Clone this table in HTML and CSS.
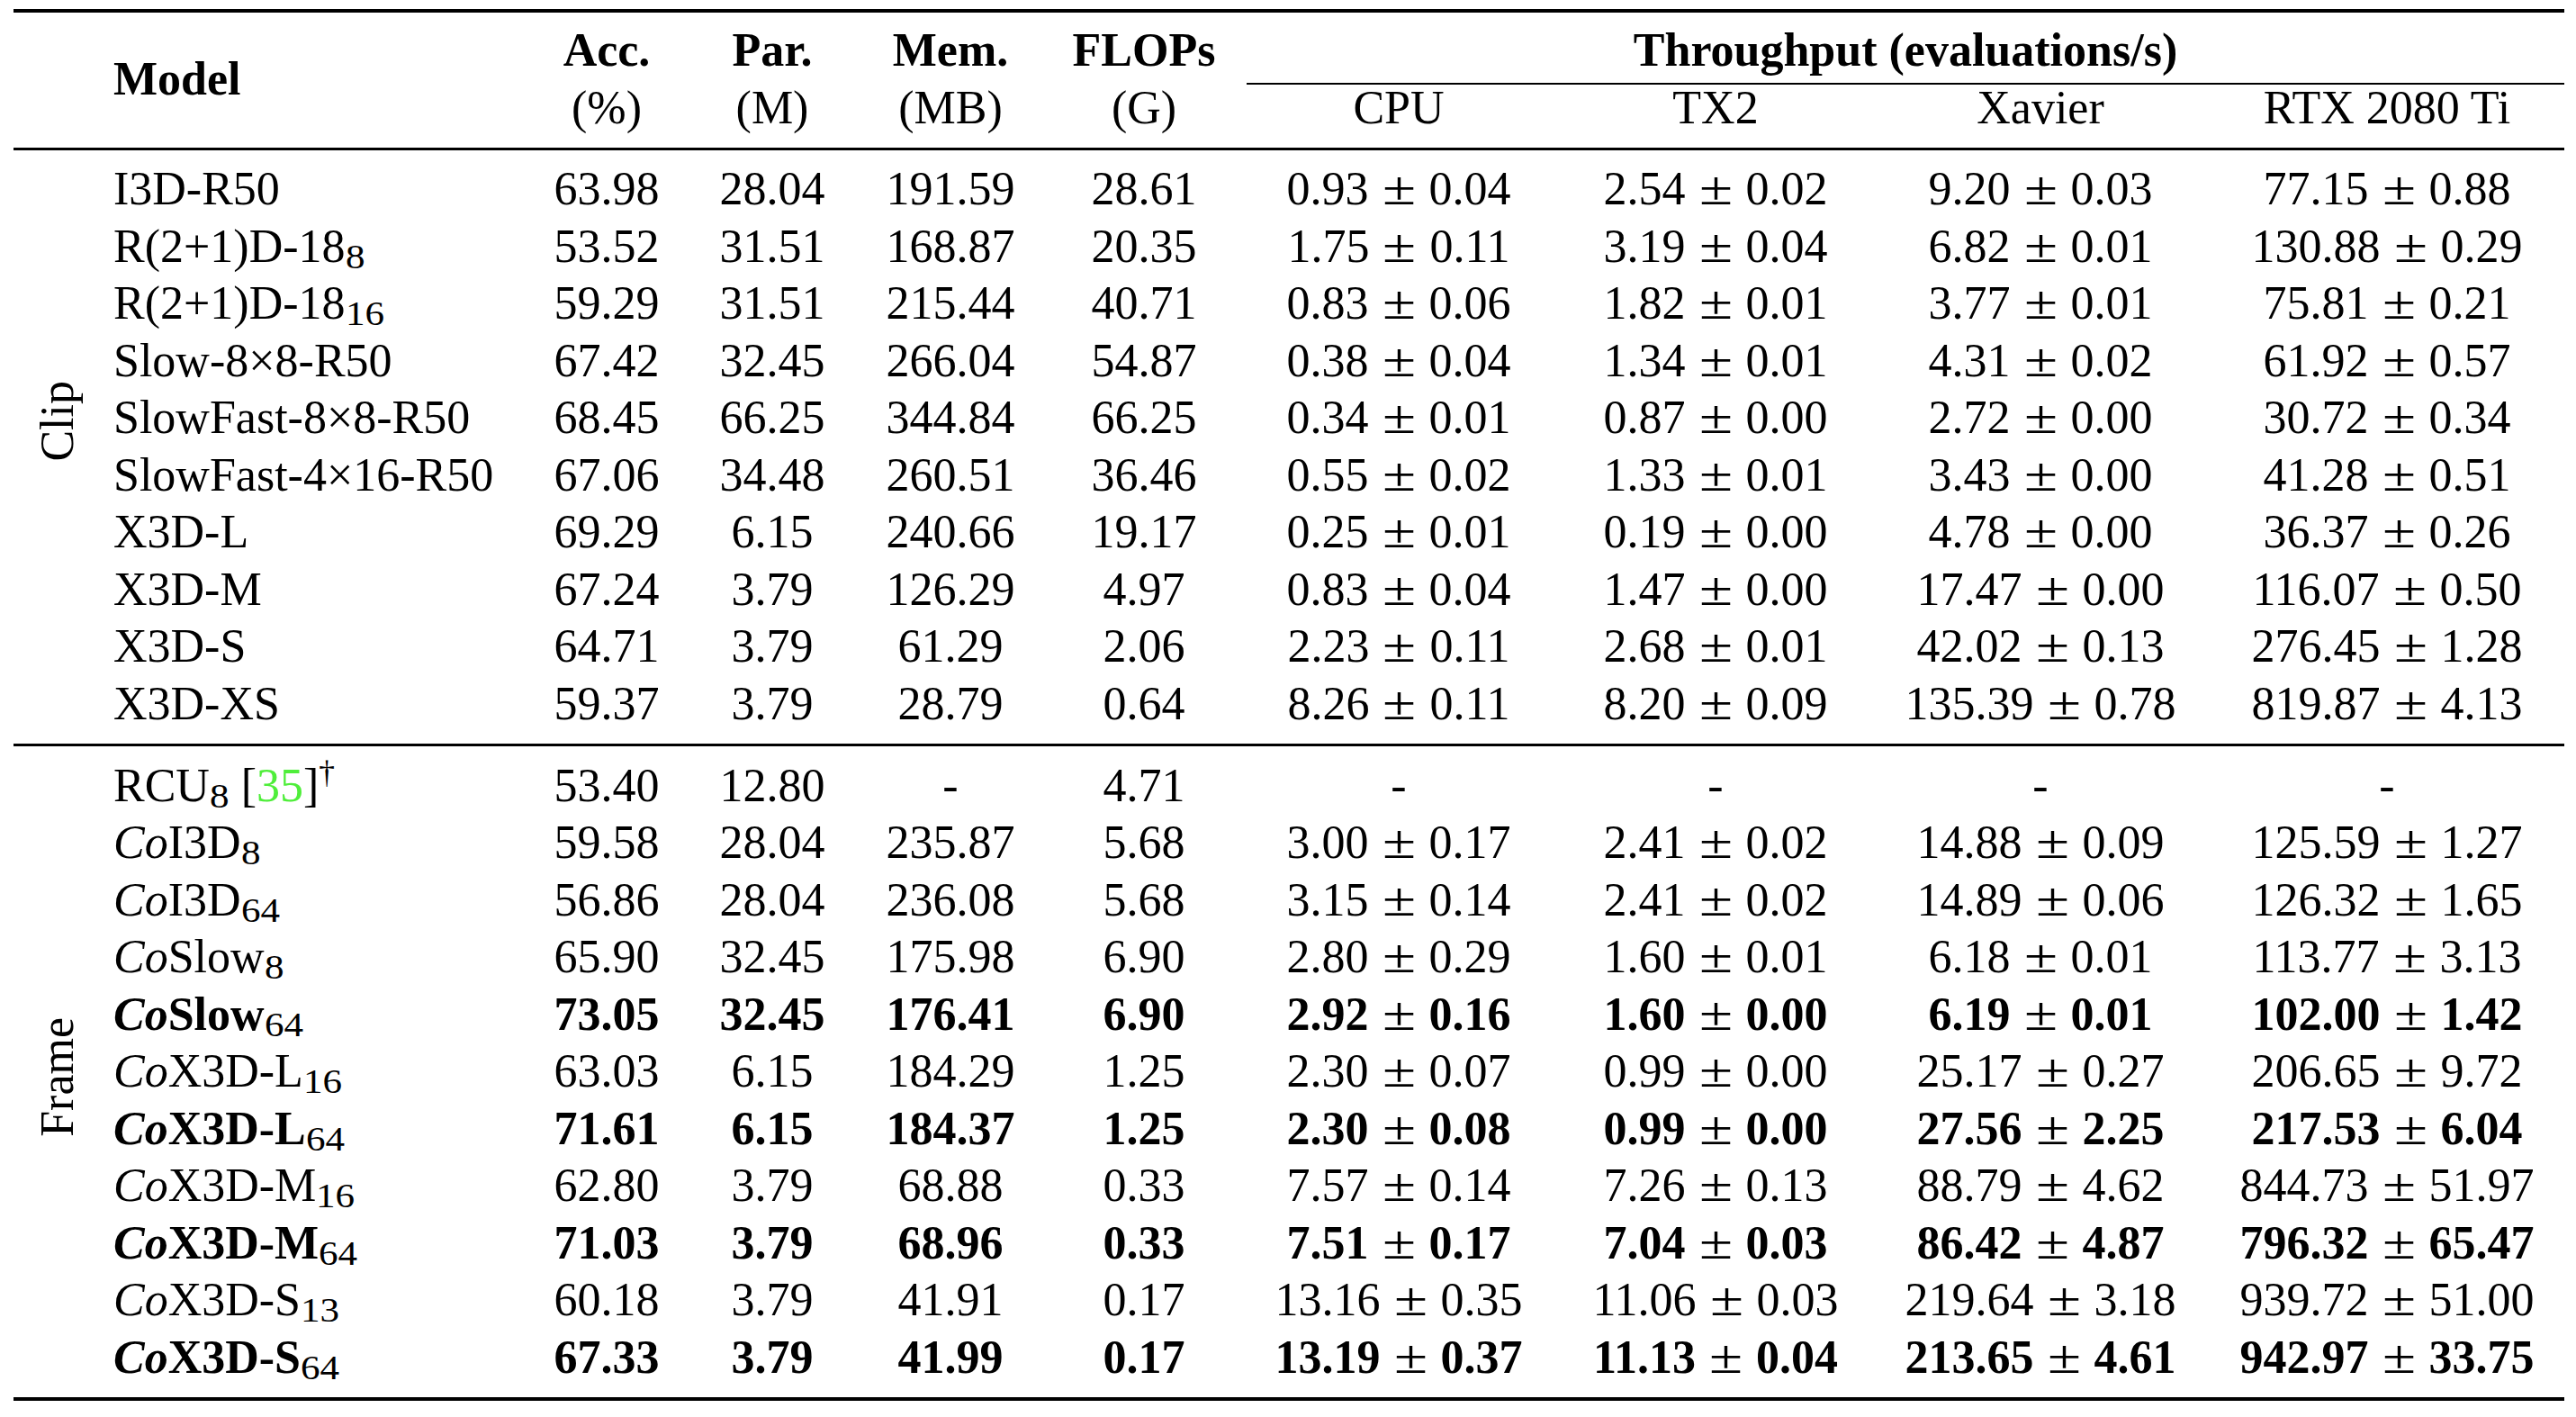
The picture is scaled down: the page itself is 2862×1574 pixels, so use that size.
FILE: index.html
```html
<!DOCTYPE html>
<html>
<head>
<meta charset="utf-8">
<link rel="stylesheet" href="styles.css">
</head>
<body>
<div class="table">
  <div class="rule-top"></div>

  <div class="corner"></div>
  <div class="model-head">Model</div>
  <div class="h1">Acc.</div>
  <div class="h1">Par.</div>
  <div class="h1">Mem.</div>
  <div class="h1 f">FLOPs</div>
  <div class="h1 thr">Throughput (evaluations/s)</div>
  <div class="h2">(%)</div>
  <div class="h2">(M)</div>
  <div class="h2">(MB)</div>
  <div class="h2 f">(G)</div>
  <div class="h2">CPU</div>
  <div class="h2">TX2</div>
  <div class="h2">Xavier</div>
  <div class="h2 r">RTX 2080 Ti</div>

  <div class="mid"></div>

  <div class="lab clip">Clip</div>
  <div class="c m">I3D-R50</div><div class="c">63.98</div><div class="c">28.04</div><div class="c">191.59</div><div class="c f">28.61</div><div class="c">0.93<span class="pm">±</span>0.04</div><div class="c">2.54<span class="pm">±</span>0.02</div><div class="c">9.20<span class="pm">±</span>0.03</div><div class="c r">77.15<span class="pm">±</span>0.88</div>
  <div class="c m">R(2+1)D-18<span class="s">8</span></div><div class="c">53.52</div><div class="c">31.51</div><div class="c">168.87</div><div class="c f">20.35</div><div class="c">1.75<span class="pm">±</span>0.11</div><div class="c">3.19<span class="pm">±</span>0.04</div><div class="c">6.82<span class="pm">±</span>0.01</div><div class="c r">130.88<span class="pm">±</span>0.29</div>
  <div class="c m">R(2+1)D-18<span class="s">16</span></div><div class="c">59.29</div><div class="c">31.51</div><div class="c">215.44</div><div class="c f">40.71</div><div class="c">0.83<span class="pm">±</span>0.06</div><div class="c">1.82<span class="pm">±</span>0.01</div><div class="c">3.77<span class="pm">±</span>0.01</div><div class="c r">75.81<span class="pm">±</span>0.21</div>
  <div class="c m">Slow-8×8-R50</div><div class="c">67.42</div><div class="c">32.45</div><div class="c">266.04</div><div class="c f">54.87</div><div class="c">0.38<span class="pm">±</span>0.04</div><div class="c">1.34<span class="pm">±</span>0.01</div><div class="c">4.31<span class="pm">±</span>0.02</div><div class="c r">61.92<span class="pm">±</span>0.57</div>
  <div class="c m">SlowFast-8×8-R50</div><div class="c">68.45</div><div class="c">66.25</div><div class="c">344.84</div><div class="c f">66.25</div><div class="c">0.34<span class="pm">±</span>0.01</div><div class="c">0.87<span class="pm">±</span>0.00</div><div class="c">2.72<span class="pm">±</span>0.00</div><div class="c r">30.72<span class="pm">±</span>0.34</div>
  <div class="c m">SlowFast-4×16-R50</div><div class="c">67.06</div><div class="c">34.48</div><div class="c">260.51</div><div class="c f">36.46</div><div class="c">0.55<span class="pm">±</span>0.02</div><div class="c">1.33<span class="pm">±</span>0.01</div><div class="c">3.43<span class="pm">±</span>0.00</div><div class="c r">41.28<span class="pm">±</span>0.51</div>
  <div class="c m">X3D-L</div><div class="c">69.29</div><div class="c">6.15</div><div class="c">240.66</div><div class="c f">19.17</div><div class="c">0.25<span class="pm">±</span>0.01</div><div class="c">0.19<span class="pm">±</span>0.00</div><div class="c">4.78<span class="pm">±</span>0.00</div><div class="c r">36.37<span class="pm">±</span>0.26</div>
  <div class="c m">X3D-M</div><div class="c">67.24</div><div class="c">3.79</div><div class="c">126.29</div><div class="c f">4.97</div><div class="c">0.83<span class="pm">±</span>0.04</div><div class="c">1.47<span class="pm">±</span>0.00</div><div class="c">17.47<span class="pm">±</span>0.00</div><div class="c r">116.07<span class="pm">±</span>0.50</div>
  <div class="c m">X3D-S</div><div class="c">64.71</div><div class="c">3.79</div><div class="c">61.29</div><div class="c f">2.06</div><div class="c">2.23<span class="pm">±</span>0.11</div><div class="c">2.68<span class="pm">±</span>0.01</div><div class="c">42.02<span class="pm">±</span>0.13</div><div class="c r">276.45<span class="pm">±</span>1.28</div>
  <div class="c m">X3D-XS</div><div class="c">59.37</div><div class="c">3.79</div><div class="c">28.79</div><div class="c f">0.64</div><div class="c">8.26<span class="pm">±</span>0.11</div><div class="c">8.20<span class="pm">±</span>0.09</div><div class="c">135.39<span class="pm">±</span>0.78</div><div class="c r">819.87<span class="pm">±</span>4.13</div>

  <div class="mid sep"></div>

  <div class="lab frame">Frame</div>
  <div class="c m">RCU<span class="s">8</span> [<span class="cite">35</span>]<span class="dag">†</span></div><div class="c">53.40</div><div class="c">12.80</div><div class="c">-</div><div class="c f">4.71</div><div class="c">-</div><div class="c">-</div><div class="c">-</div><div class="c r">-</div>
  <div class="c m"><i>Co</i>I3D<span class="s">8</span></div><div class="c">59.58</div><div class="c">28.04</div><div class="c">235.87</div><div class="c f">5.68</div><div class="c">3.00<span class="pm">±</span>0.17</div><div class="c">2.41<span class="pm">±</span>0.02</div><div class="c">14.88<span class="pm">±</span>0.09</div><div class="c r">125.59<span class="pm">±</span>1.27</div>
  <div class="c m"><i>Co</i>I3D<span class="s">64</span></div><div class="c">56.86</div><div class="c">28.04</div><div class="c">236.08</div><div class="c f">5.68</div><div class="c">3.15<span class="pm">±</span>0.14</div><div class="c">2.41<span class="pm">±</span>0.02</div><div class="c">14.89<span class="pm">±</span>0.06</div><div class="c r">126.32<span class="pm">±</span>1.65</div>
  <div class="c m"><i>Co</i>Slow<span class="s">8</span></div><div class="c">65.90</div><div class="c">32.45</div><div class="c">175.98</div><div class="c f">6.90</div><div class="c">2.80<span class="pm">±</span>0.29</div><div class="c">1.60<span class="pm">±</span>0.01</div><div class="c">6.18<span class="pm">±</span>0.01</div><div class="c r">113.77<span class="pm">±</span>3.13</div>
  <div class="c m b"><i>Co</i>Slow<span class="s">64</span></div><div class="c b">73.05</div><div class="c b">32.45</div><div class="c b">176.41</div><div class="c f b">6.90</div><div class="c b">2.92<span class="pm">±</span>0.16</div><div class="c b">1.60<span class="pm">±</span>0.00</div><div class="c b">6.19<span class="pm">±</span>0.01</div><div class="c r b">102.00<span class="pm">±</span>1.42</div>
  <div class="c m"><i>Co</i>X3D-L<span class="s">16</span></div><div class="c">63.03</div><div class="c">6.15</div><div class="c">184.29</div><div class="c f">1.25</div><div class="c">2.30<span class="pm">±</span>0.07</div><div class="c">0.99<span class="pm">±</span>0.00</div><div class="c">25.17<span class="pm">±</span>0.27</div><div class="c r">206.65<span class="pm">±</span>9.72</div>
  <div class="c m b"><i>Co</i>X3D-L<span class="s">64</span></div><div class="c b">71.61</div><div class="c b">6.15</div><div class="c b">184.37</div><div class="c f b">1.25</div><div class="c b">2.30<span class="pm">±</span>0.08</div><div class="c b">0.99<span class="pm">±</span>0.00</div><div class="c b">27.56<span class="pm">±</span>2.25</div><div class="c r b">217.53<span class="pm">±</span>6.04</div>
  <div class="c m"><i>Co</i>X3D-M<span class="s">16</span></div><div class="c">62.80</div><div class="c">3.79</div><div class="c">68.88</div><div class="c f">0.33</div><div class="c">7.57<span class="pm">±</span>0.14</div><div class="c">7.26<span class="pm">±</span>0.13</div><div class="c">88.79<span class="pm">±</span>4.62</div><div class="c r">844.73<span class="pm">±</span>51.97</div>
  <div class="c m b"><i>Co</i>X3D-M<span class="s">64</span></div><div class="c b">71.03</div><div class="c b">3.79</div><div class="c b">68.96</div><div class="c f b">0.33</div><div class="c b">7.51<span class="pm">±</span>0.17</div><div class="c b">7.04<span class="pm">±</span>0.03</div><div class="c b">86.42<span class="pm">±</span>4.87</div><div class="c r b">796.32<span class="pm">±</span>65.47</div>
  <div class="c m"><i>Co</i>X3D-S<span class="s">13</span></div><div class="c">60.18</div><div class="c">3.79</div><div class="c">41.91</div><div class="c f">0.17</div><div class="c">13.16<span class="pm">±</span>0.35</div><div class="c">11.06<span class="pm">±</span>0.03</div><div class="c">219.64<span class="pm">±</span>3.18</div><div class="c r">939.72<span class="pm">±</span>51.00</div>
  <div class="c m b"><i>Co</i>X3D-S<span class="s">64</span></div><div class="c b">67.33</div><div class="c b">3.79</div><div class="c b">41.99</div><div class="c f b">0.17</div><div class="c b">13.19<span class="pm">±</span>0.37</div><div class="c b">11.13<span class="pm">±</span>0.04</div><div class="c b">213.65<span class="pm">±</span>4.61</div><div class="c r b">942.97<span class="pm">±</span>33.75</div>

  <div class="rule-bottom"></div>
</div>
</body>
</html>
```

FILE: styles.css
```css
html, body {
  margin: 0;
  padding: 0;
  background: #fff;
}

.table {
  display: grid;
  grid-template-columns: 97px 486px 152px 216px 180px 239px 338px 366px 356px 404px;
  width: 2834px;
  margin: 10px 0 0 15px;
  font-family: "Liberation Serif", "Times New Roman", serif;
  font-size: 52px;
  color: #000;
}

.rule-top {
  grid-column: 1 / -1;
  height: 4px;
  background: #000;
}

.rule-bottom {
  grid-column: 1 / -1;
  height: 4px;
  background: #000;
  margin-top: 12.25px;
}

.mid {
  grid-column: 1 / -1;
  height: 3px;
  background: #000;
  margin-bottom: 11.25px;
}

.mid.sep {
  margin-top: 12.25px;
  margin-bottom: 12.25px;
}

.corner {
  grid-row: span 2;
}

.model-head {
  grid-row: span 2;
  align-self: center;
  font-weight: 700;
  line-height: 52px;
  padding-left: 14px;
  padding-bottom: 3px;
}

.h1 {
  font-weight: 700;
  text-align: center;
  line-height: 52px;
  padding: 16px 0 10px;
  white-space: nowrap;
}

.thr {
  grid-column: span 4;
  border-bottom: 2px solid #000;
}

.h2 {
  text-align: center;
  line-height: 52px;
  padding-bottom: 18px;
  white-space: nowrap;
}

.lab {
  writing-mode: vertical-rl;
  transform: rotate(180deg);
  justify-self: center;
  align-self: center;
  line-height: 52px;
  white-space: nowrap;
}

.lab.clip {
  grid-row: span 10;
  margin-bottom: 55.5px;
}

.lab.frame {
  grid-row: span 11;
  margin-top: 12px;
}

.c {
  line-height: 63.5px;
  height: 63.5px;
  text-align: center;
  white-space: nowrap;
}

.m {
  text-align: left;
  padding-left: 14px;
}

.f {
  padding-left: 11px;
}

.r {
  padding-left: 10px;
}

.b {
  font-weight: 700;
}

.s {
  display: inline-block;
  font-size: 0.72em;
  vertical-align: -7px;
  line-height: 0;
  font-weight: 400;
  transform: scaleX(1.15);
  transform-origin: left center;
  margin-right: 3px;
}

.dag {
  font-size: 0.68em;
  vertical-align: 20px;
  line-height: 0;
  font-weight: 400;
}

.cite {
  color: #4fee3a;
}

.pm {
  display: inline-block;
  width: 67px;
  text-align: center;
  font-weight: 400;
  transform: scaleX(1.3);
}
```
